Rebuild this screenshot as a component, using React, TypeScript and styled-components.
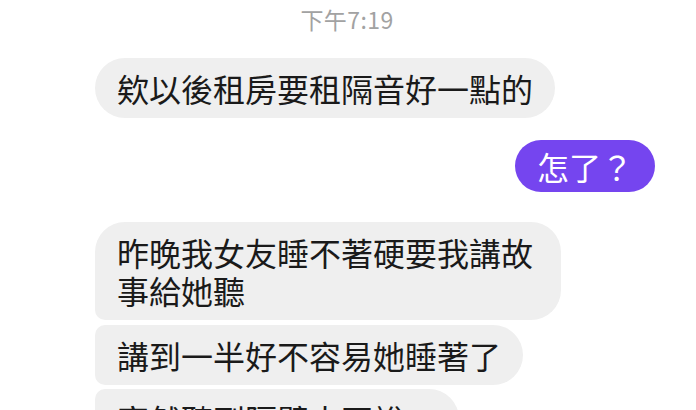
import React from "react";
import styled, { createGlobalStyle } from "styled-components";

const GlobalStyle = createGlobalStyle`
  html, body {
    margin: 0;
    padding: 0;
    background: #ffffff;
    overflow: hidden;
  }
  body {
    font-family: "Noto Sans CJK TC", "Noto Sans", sans-serif;
  }
`;

const ChatPage = styled.div`
  width: 696px;
  height: 410px;
  overflow: hidden;
  display: flex;
  flex-direction: column;
  padding: 6px 41px 0 95px;
  box-sizing: border-box;
`;

const TimeStamp = styled.div`
  align-self: center;
  margin-left: -56px;
  font-size: 23px;
  line-height: 26px;
  color: #a2a2a2;
  letter-spacing: 0.4px;
`;

type Corner = "single" | "first" | "middle" | "last";

const radii: Record<Corner, string> = {
  single: "30px",
  first: "30px 30px 30px 10px",
  middle: "10px 30px 30px 10px",
  last: "10px 30px 30px 30px",
};

const Bubble = styled.div<{ $gap: number; $corner: Corner }>`
  align-self: flex-start;
  box-sizing: border-box;
  max-width: 466px;
  margin-top: ${(p) => p.$gap}px;
  padding: 11px 22px;
  background: #efefef;
  color: #1a1a1a;
  font-size: 32px;
  line-height: 38px;
  border-radius: ${(p) => radii[p.$corner]};
  flex-shrink: 0;
`;

const SentBubble = styled.div<{ $gap: number }>`
  align-self: flex-end;
  margin-top: ${(p) => p.$gap}px;
  padding: 7px 22px;
  background: #7545ef;
  color: #ffffff;
  font-size: 32px;
  line-height: 38px;
  border-radius: 28px;
  flex-shrink: 0;
`;

export default function App() {
  return (
    <>
      <GlobalStyle />
      <ChatPage>
        <TimeStamp>下午7:19</TimeStamp>
        <Bubble $gap={26} $corner="single">
          欸以後租房要租隔音好一點的
        </Bubble>
        <SentBubble $gap={22}>怎了？</SentBubble>
        <Bubble $gap={30} $corner="first">
          昨晚我女友睡不著硬要我講故事給她聽
        </Bubble>
        <Bubble $gap={5} $corner="middle">
          講到一半好不容易她睡著了
        </Bubble>
        <Bubble $gap={4} $corner="last">
          突然聽到隔壁大哥說：
        </Bubble>
      </ChatPage>
    </>
  );
}
